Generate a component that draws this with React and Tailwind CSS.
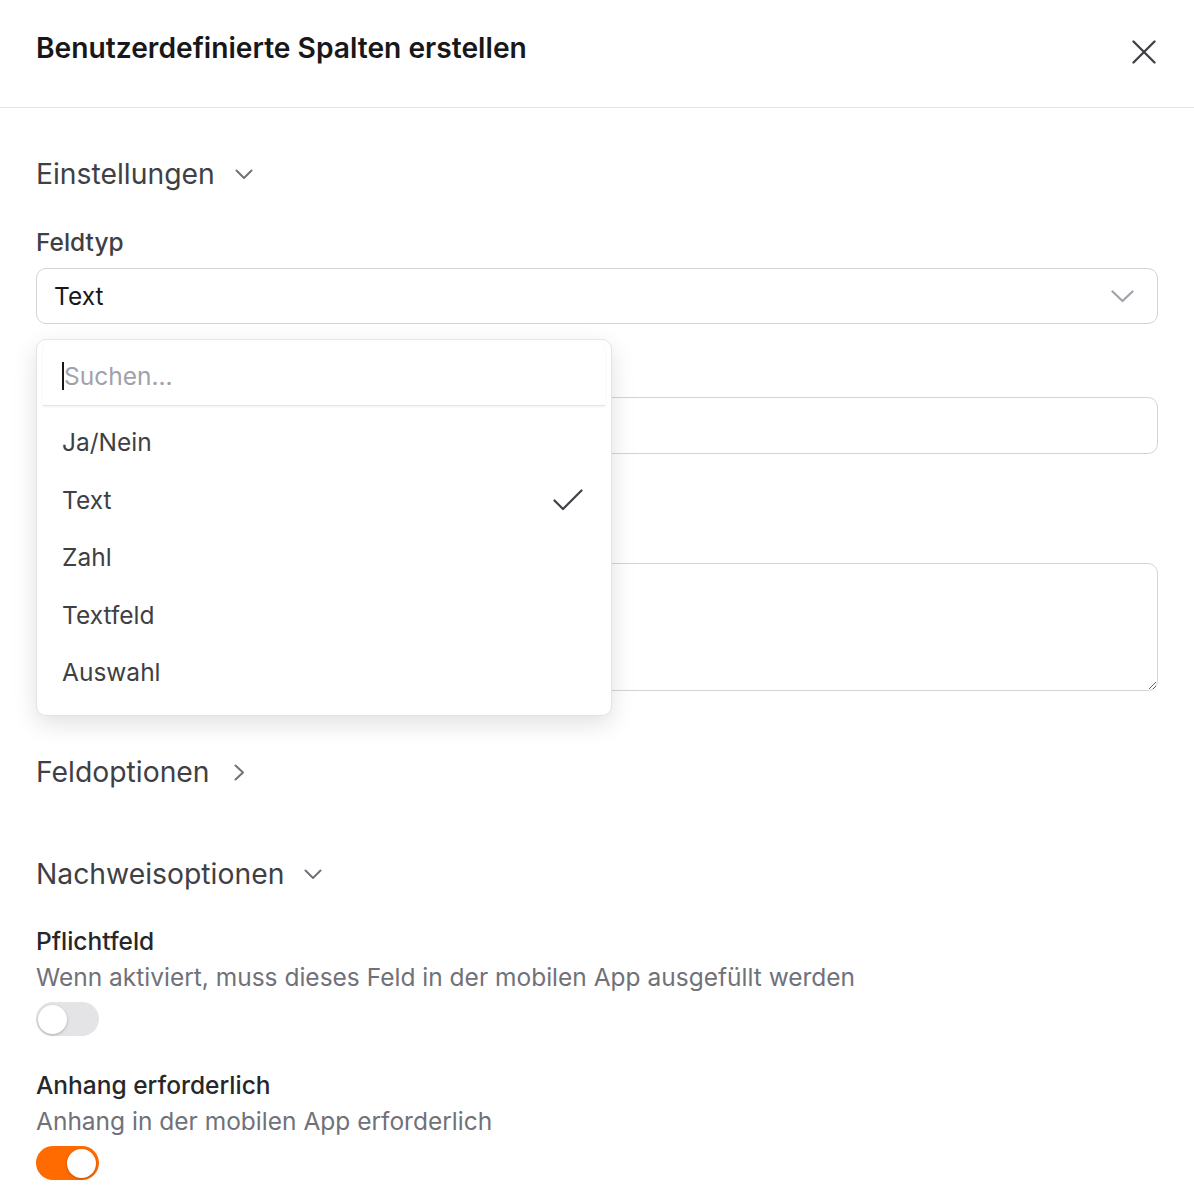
import React from "react";

function ChevronDown({ className = "" }) {
  return (
    <svg className={className} width="18" height="11" viewBox="0 0 18 11" fill="none">
      <path d="M1.5 1.5L9 9L16.5 1.5" stroke="#71717a" strokeWidth="2" strokeLinecap="round" strokeLinejoin="round" />
    </svg>
  );
}

function ChevronRight({ className = "" }) {
  return (
    <svg className={className} width="11" height="17" viewBox="0 0 11 17" fill="none">
      <path d="M1.5 1.5L9 8.5L1.5 15.5" stroke="#71717a" strokeWidth="2" strokeLinecap="round" strokeLinejoin="round" />
    </svg>
  );
}

function Toggle({ on }) {
  return (
    <div
      className={
        on
          ? "mt-[7px] w-[63px] h-[34px] rounded-full bg-[#ff6b00] flex items-center justify-end pr-[3px]"
          : "mt-[7px] w-[63px] h-[34px] rounded-full bg-[#e4e4e7] flex items-center justify-start pl-[2px]"
      }
    >
      <div className="w-[29px] h-[29px] rounded-full bg-white shadow-[0_1px_3px_rgba(0,0,0,0.25)]" />
    </div>
  );
}

export default function App() {
  const items = ["Ja/Nein", "Text", "Zahl", "Textfeld", "Auswahl"];
  return (
    <div className="relative w-[1194px] h-[1204px] overflow-hidden bg-white font-['Inter',sans-serif] text-[#3f3f46]">
      <header className="h-[108px] border-b border-[#e4e4e7] flex items-start justify-between pl-9 pr-[38px]">
        <h1 className="mt-[30px] text-[28.2px] leading-[36px] font-semibold text-[#18181b]">
          Benutzerdefinierte Spalten erstellen
        </h1>
        <button className="mt-[40px]" aria-label="Schließen">
          <svg width="24" height="24" viewBox="0 0 24 24" fill="none">
            <path d="M1.5 1.5L22.5 22.5M22.5 1.5L1.5 22.5" stroke="#3f3f46" strokeWidth="2.3" strokeLinecap="round" />
          </svg>
        </button>
      </header>

      <div className="relative px-9 flex flex-col">
        <div className="mt-[48px] h-[36px] flex items-center gap-5">
          <span className="text-[28.3px] leading-[36px]">Einstellungen</span>
          <ChevronDown className="mt-[1px]" />
        </div>

        <label className="mt-[34px] block text-[24.5px] leading-[32px] font-medium">Feldtyp</label>
        <div className="mt-[10px] h-[56px] rounded-[10px] border-[1.5px] border-[#d4d4d8] flex items-center justify-between pl-[17px] pr-[23px]">
          <span className="text-[24.5px] text-[#18181b]">Text</span>
          <svg width="23" height="13" viewBox="0 0 23 13" fill="none">
            <path d="M1.5 1.5L11.5 11L21.5 1.5" stroke="#a1a1aa" strokeWidth="2.2" strokeLinecap="round" strokeLinejoin="round" />
          </svg>
        </div>

        <div className="mt-[31px] h-[32px]" />
        <input aria-label="Spaltenname" className="mt-[10px] h-[57px] rounded-[10px] border-[1.5px] border-[#d4d4d8] px-[17px] text-[24px] outline-none" />

        <div className="mt-[67px] h-[32px]" />
        <textarea aria-label="Beschreibung" className="mt-[10px] h-[128px] rounded-[10px] border-[1.5px] border-[#d4d4d8] px-[17px] py-3 text-[24px] outline-none resize-y" />

        <div className="mt-[63px] h-[36px] flex items-center gap-[24px]">
          <span className="text-[28.3px] leading-[36px]">Feldoptionen</span>
          <ChevronRight />
        </div>

        <div className="mt-[66px] h-[36px] flex items-center gap-5">
          <span className="text-[28.3px] leading-[36px]">Nachweisoptionen</span>
          <ChevronDown className="mt-[1px]" />
        </div>

        <div className="mt-[31px] text-[24.5px] leading-[36px] font-medium text-[#27272a]">Pflichtfeld</div>
        <div className="text-[24.5px] leading-[36px] text-[#71717a]">
          Wenn aktiviert, muss dieses Feld in der mobilen App ausgefüllt werden
        </div>
        <Toggle on={false} />

        <div className="mt-[31px] text-[24.5px] leading-[36px] font-medium text-[#27272a]">Anhang erforderlich</div>
        <div className="text-[24.5px] leading-[36px] text-[#71717a]">Anhang in der mobilen App erforderlich</div>
        <Toggle on={true} />
      </div>

      {/* Dropdown popover */}
      <div className="absolute left-[36px] top-[339px] w-[576px] h-[377px] rounded-[10px] border border-[#e4e4e7] bg-white shadow-[0_8px_24px_rgba(0,0,0,0.12)] flex flex-col">
        <div className="mx-[6px] mt-[2px] h-[64px] rounded-t-[8px] border-b border-[#e4e4e7] shadow-[0_1px_3px_rgba(0,0,0,0.06)] flex items-center pl-[19px] pt-[5px]">
          <span className="w-[2px] h-[28px] bg-[#18181b]" />
          <span className="text-[24.5px] text-[#a1a1aa]">Suchen...</span>
        </div>
        <ul className="pt-[8px] flex flex-col">
          {items.map((it) => (
            <li key={it} className="h-[57.5px] flex items-center justify-between pl-[25px] pr-[28px] text-[24.5px] text-[#3f3f46]">
              <span>{it}</span>
              {it === "Text" && (
                <svg width="30" height="22" viewBox="0 0 30 22" fill="none">
                  <path d="M1.5 11.5L10 20L28.5 1.5" stroke="#3f3f46" strokeWidth="2.2" strokeLinecap="round" strokeLinejoin="round" />
                </svg>
              )}
            </li>
          ))}
        </ul>
      </div>
    </div>
  );
}
